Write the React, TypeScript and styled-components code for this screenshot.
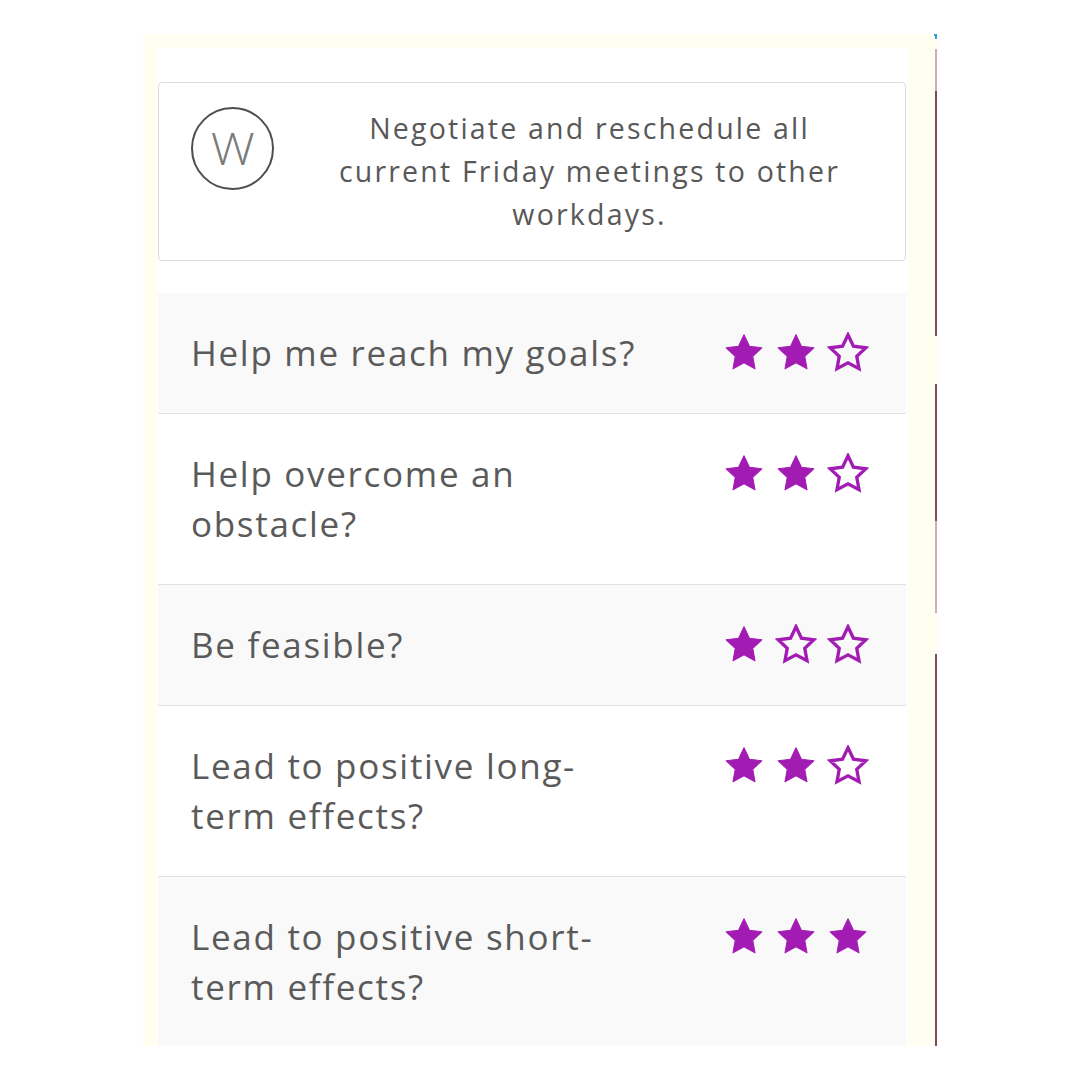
import React from "react";
import styled, { createGlobalStyle } from "styled-components";

const GlobalStyle = createGlobalStyle`
  html, body { margin: 0; padding: 0; background: #ffffff; }
  body { font-family: "Open Sans", "Noto Sans", sans-serif; }
`;

const Page = styled.div`
  width: 1080px;
  height: 1080px;
  padding: 34px 0 0 143px;
  box-sizing: border-box;
  overflow: hidden;
`;

const Frame = styled.div`
  width: 795px;
  height: 1012px;
  background: #fffef1;
  display: flex;
  align-items: flex-start;
  padding-left: 14px;
  box-sizing: border-box;
  overflow: hidden;
`;

const Panel = styled.div`
  width: 750px;
  height: 998px;
  margin-top: 14px;
  background: #ffffff;
  padding: 34px 1px 0;
  box-sizing: border-box;
  overflow: hidden;
  display: flex;
  flex-direction: column;
  gap: 32px;
`;

const Gutter = styled.div`
  flex: 1;
`;

const EdgeRail = styled.div`
  width: 2px;
  height: 100%;
  margin-right: 1px;
  display: flex;
  flex-direction: column;
`;

const Tick = styled.div`
  width: 3px;
  height: 6px;
  margin-left: -1px;
  border-top: 2px solid #2aa3dc;
  border-right: 2px solid #2aa3dc;
  box-sizing: border-box;
`;

const Segment = styled.div<{ $h: number; $tone: "dark" | "light" | "none" }>`
  height: ${(p) => p.$h}px;
  flex: none;
  background: ${(p) =>
    p.$tone === "dark" ? "#7b4a67" : p.$tone === "light" ? "#c9aebd" : "transparent"};
`;

const Card = styled.div`
  border: 1px solid #dcdcdc;
  border-radius: 4px;
  padding: 24px 32px;
  display: flex;
  align-items: flex-start;
  gap: 32px;
`;

const Avatar = styled.div`
  width: 83px;
  height: 83px;
  flex: none;
  border: 2px solid #4e4e4e;
  border-radius: 50%;
  box-sizing: border-box;
  display: flex;
  align-items: center;
  justify-content: center;
  font-family: "Open Sans", sans-serif;
  font-weight: 300;
  font-size: 44px;
  transform-origin: center;
  color: #7a7a7a;
  line-height: 1;
  padding-bottom: 2px;
`;

const AvatarLetter = styled.span`
  display: inline-block;
  transform: scaleX(1.12);
`;

const CardText = styled.div`
  flex: 1;
  text-align: center;
  font-family: "Open Sans", sans-serif;
  font-size: 28.5px;
  line-height: 43px;
  letter-spacing: 2.2px;
  color: #585858;
  white-space: pre-line;
`;

const List = styled.div`
  display: flex;
  flex-direction: column;
`;

const Row = styled.div<{ $shade: boolean }>`
  display: flex;
  align-items: flex-start;
  justify-content: space-between;
  padding: 35px 37px 35px 33px;
  background: ${(p) => (p.$shade ? "#f9f9f9" : "#ffffff")};
  border-bottom: 1px solid #e2e2e2;
`;

const Question = styled.div`
  font-family: "Open Sans", sans-serif;
  font-size: 35px;
  line-height: 50px;
  letter-spacing: 1.7px;
  color: #5a5a5a;
  white-space: pre-line;
`;

const Stars = styled.div`
  display: flex;
  gap: 10px;
  padding-top: 4px;
`;

const StarSvg = styled.svg`
  width: 42px;
  height: 42px;
  display: block;
`;

const STAR =
  "12,1.6 15.1,8.1 22.2,9 17,13.9 18.3,21 12,17.6 5.7,21 7,13.9 1.8,9 8.9,8.1";

function Star({ filled }: { filled: boolean }) {
  return (
    <StarSvg viewBox="0 0 24 24">
      {filled ? (
        <polygon points={STAR} fill="#a21cb4" stroke="#a21cb4" strokeWidth="0.6" strokeLinejoin="round" />
      ) : (
        <polygon points={STAR} fill="none" stroke="#a21cb4" strokeWidth="1.9" strokeLinejoin="miter" />
      )}
    </StarSvg>
  );
}

const questions = [
  { text: "Help me reach my goals?", rating: 2 },
  { text: "Help overcome an\nobstacle?", rating: 2 },
  { text: "Be feasible?", rating: 1 },
  { text: "Lead to positive long-\nterm effects?", rating: 2 },
  { text: "Lead to positive short-\nterm effects?", rating: 3 },
];

const rail: { h: number; tone: "dark" | "light" | "none" }[] = [
  { h: 10, tone: "none" },
  { h: 42, tone: "light" },
  { h: 245, tone: "dark" },
  { h: 48, tone: "none" },
  { h: 137, tone: "dark" },
  { h: 92, tone: "light" },
  { h: 41, tone: "none" },
  { h: 392, tone: "dark" },
];

export default function App() {
  return (
    <>
      <GlobalStyle />
      <Page>
        <Frame>
          <Panel>
            <Card>
              <Avatar>
                <AvatarLetter>W</AvatarLetter>
              </Avatar>
              <CardText>
                {"Negotiate and reschedule all\ncurrent Friday meetings to other\nworkdays."}
              </CardText>
            </Card>
            <List>
              {questions.map((q, i) => (
                <Row key={i} $shade={i % 2 === 0}>
                  <Question>{q.text}</Question>
                  <Stars>
                    {[0, 1, 2].map((s) => (
                      <Star key={s} filled={s < q.rating} />
                    ))}
                  </Stars>
                </Row>
              ))}
            </List>
          </Panel>
          <Gutter />
          <EdgeRail>
            <Tick />
            {rail.map((r, i) => (
              <Segment key={i} $h={r.h} $tone={r.tone} />
            ))}
          </EdgeRail>
        </Frame>
      </Page>
    </>
  );
}
